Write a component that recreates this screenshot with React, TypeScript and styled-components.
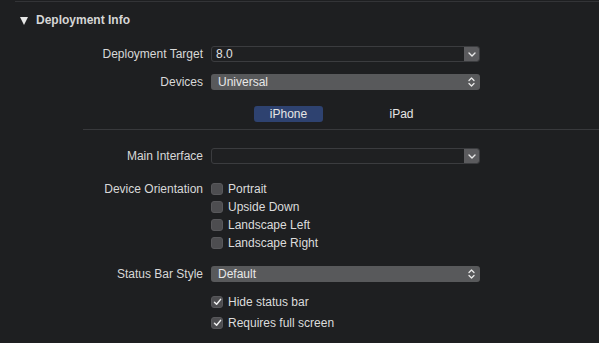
import React from "react";
import styled, { createGlobalStyle } from "styled-components";

const Global = createGlobalStyle`
  html, body {
    margin: 0;
    padding: 0;
    background: #1e1f21;
  }
  body {
    font-family: "Liberation Sans", Arial, sans-serif;
    color: #dcdcdc;
    font-size: 12px;
  }
`;

const Page = styled.div`
  width: 599px;
  height: 343px;
  overflow: hidden;
  background: #1e1f21;
`;

const TopRule = styled.div`
  margin-left: 15px;
  margin-top: 1px;
  height: 1px;
  background: #333437;
`;

const Header = styled.div`
  display: flex;
  align-items: center;
  gap: 8px;
  height: 36px;
  padding-left: 20px;
  font-weight: bold;
  font-size: 12px;
  color: #d6d6d6;
`;

const Triangle = styled.div`
  width: 0;
  height: 0;
  border-left: 4.5px solid transparent;
  border-right: 4.5px solid transparent;
  border-top: 8px solid #e6e6e6;
  margin-top: 1px;
`;

const Grid = styled.div`
  display: grid;
  grid-template-columns: 203px 269px;
  column-gap: 8px;
  align-items: center;
`;

const Label = styled.div<{ $h?: number }>`
  text-align: right;
  height: ${(p) => p.$h ?? 16}px;
  line-height: ${(p) => p.$h ?? 16}px;
  color: #d8d8d8;
  white-space: nowrap;
`;

const Cell = styled.div<{ $h?: number }>`
  height: ${(p) => p.$h ?? 16}px;
  display: flex;
  align-items: center;
`;

const Spacer = styled.div<{ $h: number }>`
  grid-column: 1 / span 2;
  height: ${(p) => p.$h}px;
`;

const Combo = styled.div`
  flex: 1;
  height: 16px;
  display: flex;
  border: 1px solid #3b3c3f;
  border-radius: 3px;
  background: #1f2022;
  box-sizing: border-box;
  overflow: hidden;
`;

const ComboText = styled.div`
  flex: 1;
  padding-left: 4px;
  line-height: 14px;
  color: #e2e2e2;
`;

const ComboButton = styled.div`
  width: 15px;
  background: #5b5b5e;
  display: flex;
  align-items: center;
  justify-content: center;
`;

const Popup = styled.div`
  flex: 1;
  height: 16px;
  display: flex;
  align-items: center;
  background: #58595b;
  border-radius: 3px;
  padding: 0 5px 0 7px;
  box-sizing: border-box;
  color: #e8e8e8;
`;

const PopupText = styled.div`
  flex: 1;
`;

const Segments = styled.div`
  grid-column: 1 / span 2;
  display: flex;
  height: 16px;
  padding-left: 254px;
  align-items: center;
`;

const Segment = styled.div<{ $active?: boolean }>`
  width: 69px;
  height: 16px;
  line-height: 16px;
  border-radius: 3px;
  text-align: center;
  background: ${(p) => (p.$active ? "#2e4270" : "transparent")};
  color: #e6e6e6;
`;

const SegmentGap = styled.div`
  width: 44px;
`;

const Separator = styled.div`
  grid-column: 1 / span 2;
  margin-left: 83px;
  margin-right: -119px;
  height: 1px;
  background: #38393c;
`;

const CheckList = styled.div`
  display: flex;
  flex-direction: column;
`;

const CheckRow = styled.div<{ $h?: number }>`
  display: flex;
  align-items: center;
  gap: 5px;
  height: ${(p) => p.$h ?? 18}px;
  color: #dcdcdc;
`;

const Box = styled.div`
  width: 12px;
  height: 12px;
  border-radius: 3px;
  background: #4d4d50;
  border: 1px solid #58585b;
  box-sizing: border-box;
  display: flex;
  align-items: center;
  justify-content: center;
`;

const Down = () => (
  <svg width="8" height="5" viewBox="0 0 8 5">
    <path d="M1 1 L4 4 L7 1" stroke="#e8e8e8" strokeWidth="1.4" fill="none" strokeLinecap="round" strokeLinejoin="round" />
  </svg>
);

const UpDown = () => (
  <svg width="7" height="10" viewBox="0 0 7 10">
    <path d="M1 3.5 L3.5 1 L6 3.5 M1 6.5 L3.5 9 L6 6.5" stroke="#e8e8e8" strokeWidth="1.3" fill="none" strokeLinecap="round" strokeLinejoin="round" />
  </svg>
);

const Check = () => (
  <svg width="9" height="8" viewBox="0 0 9 8">
    <path d="M1.5 4.2 L3.6 6.3 L7.6 1.4" stroke="#f0f0f0" strokeWidth="1.5" fill="none" strokeLinecap="round" strokeLinejoin="round" />
  </svg>
);

export default function App() {
  return (
    <Page>
      <Global />
      <TopRule />
      <Header>
        <Triangle />
        Deployment Info
      </Header>
      <Grid>
        <Spacer $h={8} />
        <Label>Deployment Target</Label>
        <Cell>
          <Combo>
            <ComboText>8.0</ComboText>
            <ComboButton>
              <Down />
            </ComboButton>
          </Combo>
        </Cell>
        <Spacer $h={12} />
        <Label>Devices</Label>
        <Cell>
          <Popup>
            <PopupText>Universal</PopupText>
            <UpDown />
          </Popup>
        </Cell>
        <Spacer $h={16} />
        <Segments>
          <Segment $active>iPhone</Segment>
          <SegmentGap />
          <Segment>iPad</Segment>
        </Segments>
        <Spacer $h={7} />
        <Separator />
        <Spacer $h={18} />
        <Label>Main Interface</Label>
        <Cell>
          <Combo>
            <ComboText />
            <ComboButton>
              <Down />
            </ComboButton>
          </Combo>
        </Cell>
        <Spacer $h={16} />
        <Label style={{ alignSelf: "start" }} $h={18}>
          Device Orientation
        </Label>
        <CheckList>
          <CheckRow>
            <Box />
            Portrait
          </CheckRow>
          <CheckRow>
            <Box />
            Upside Down
          </CheckRow>
          <CheckRow>
            <Box />
            Landscape Left
          </CheckRow>
          <CheckRow>
            <Box />
            Landscape Right
          </CheckRow>
        </CheckList>
        <Spacer $h={14} />
        <Label>Status Bar Style</Label>
        <Cell>
          <Popup>
            <PopupText>Default</PopupText>
            <UpDown />
          </Popup>
        </Cell>
        <Spacer $h={9} />
        <div />
        <CheckList>
          <CheckRow $h={22}>
            <Box>
              <Check />
            </Box>
            Hide status bar
          </CheckRow>
          <CheckRow $h={20}>
            <Box>
              <Check />
            </Box>
            Requires full screen
          </CheckRow>
        </CheckList>
      </Grid>
    </Page>
  );
}
